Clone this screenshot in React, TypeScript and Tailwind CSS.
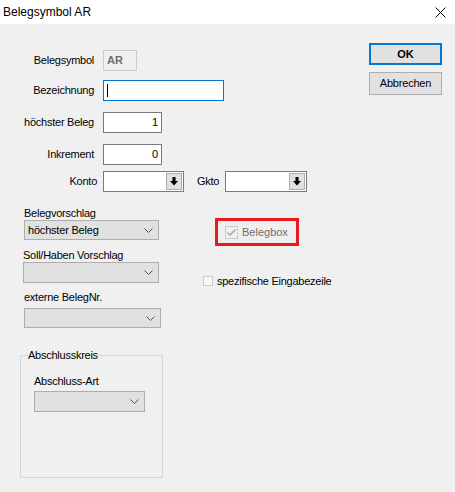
import React from "react";

const font = { fontFamily: '"Liberation Sans", Arial, sans-serif' };

function Chevron() {
  return (
    <svg width="9" height="5" viewBox="0 0 9 5" className="block">
      <path d="M0.5 0.5 L4.5 4.5 L8.5 0.5" fill="none" stroke="#505050" strokeWidth="1" />
    </svg>
  );
}

function Select({ value, className }: { value?: string; className: string }) {
  return (
    <div
      className={`flex items-center justify-between border border-[#adadad] bg-[#e1e1e1] pl-[3px] pr-[5px] text-[11px] tracking-[-0.2px] text-black ${className}`}
    >
      <span>{value}</span>
      <Chevron />
    </div>
  );
}

function ComboBox({ width }: { width: string }) {
  return (
    <div className={`flex h-[21px] shrink-0 items-center justify-end border border-[#7a7a7a] bg-white pr-[1px] ${width}`}>
      <div className="flex h-[17px] w-[16px] items-center justify-center border border-[#adadad] bg-[#e1e1e1]">
        <svg width="8" height="9" viewBox="0 0 8 9" className="block">
          <path d="M2.5 0 H5.5 V4 H8 L4 8.5 L0 4 H2.5 Z" fill="#000" />
        </svg>
      </div>
    </div>
  );
}

function Label({ children }: { children: React.ReactNode }) {
  return (
    <div className="w-[95px] shrink-0 pr-[1px] text-right text-[11px] tracking-[-0.25px] text-black">{children}</div>
  );
}

export default function App() {
  return (
    <div className="h-[492px] w-[455px] overflow-hidden bg-[#f0f0f0] text-black" style={font}>
      <div className="flex h-[24px] items-center justify-between bg-white pl-[3px] pr-[9px]">
        <span className="text-[12px]">Belegsymbol AR</span>
        <svg width="11" height="11" viewBox="0 0 11 11" className="block">
          <path d="M0.5 0.5 L10.5 10.5 M10.5 0.5 L0.5 10.5" stroke="#000" strokeWidth="1" />
        </svg>
      </div>

      <div className="flex">
        <div className="flex-1 pt-[26px]">
          <div className="flex h-[21px] items-center gap-[8px]">
            <Label>Belegsymbol</Label>
            <div className="flex h-[21px] w-[34px] items-center border border-[#cccccc] pl-[3px] text-[11px] font-bold text-[#6d6d6d]">
              AR
            </div>
          </div>
          <div className="mt-[9px] flex h-[21px] items-center gap-[8px]">
            <Label>Bezeichnung</Label>
            <div className="flex h-[21px] w-[121px] items-center border border-[#0078d7] bg-white pl-[3px]">
              <div className="h-[13px] w-px bg-black" />
            </div>
          </div>
          <div className="mt-[11px] flex h-[21px] items-center gap-[8px]">
            <Label>höchster Beleg</Label>
            <div className="flex h-[21px] w-[59px] items-center justify-end border border-[#7a7a7a] bg-white pr-[3px] text-[11px]">
              1
            </div>
          </div>
          <div className="mt-[11px] flex h-[21px] items-center gap-[8px]">
            <Label>Inkrement</Label>
            <div className="flex h-[21px] w-[59px] items-center justify-end border border-[#7a7a7a] bg-white pr-[3px] text-[11px]">
              0
            </div>
          </div>
          <div className="mt-[6px] flex h-[21px] items-center">
            <div className="w-[97px] shrink-0 text-right text-[11px] tracking-[-0.25px]">Konto</div>
            <ComboBox width="ml-[6px] w-[81px]" />
            <span className="ml-[13px] w-[28px] shrink-0 text-[11px] tracking-[-0.25px]">Gkto</span>
            <ComboBox width="w-[82px]" />
          </div>
        </div>

        <div className="mr-[13px] flex w-[73px] flex-col gap-[7px] pt-[19px]">
          <div className="flex h-[22px] items-center justify-center border-2 border-[#0078d7] bg-[#e1e1e1] text-[11px] font-bold">
            OK
          </div>
          <div className="flex h-[23px] items-center justify-center border border-[#adadad] bg-[#e1e1e1] text-[11px] tracking-[-0.2px]">
            Abbrechen
          </div>
        </div>
      </div>

      <div className="mt-[15px] flex">
        <div className="w-[161px] shrink-0 pl-[24px] text-[11px] tracking-[-0.25px]">
          <div className="h-[13px] leading-[13px]">Belegvorschlag</div>
          <Select value="höchster Beleg" className="h-[20px] w-[135px]" />
          <div className="mt-[9px] h-[13px] -ml-px leading-[13px]">Soll/Haben Vorschlag</div>
          <Select className="h-[21px] w-[136px] -ml-px" />
          <div className="mt-[8px] h-[13px] leading-[13px]">externe BelegNr.</div>
          <Select className="mt-[4px] h-[20px] w-[137px]" />
        </div>

        <div className="ml-[42px] flex flex-col items-start">
          <div className="ml-[12px] mt-[11px] flex h-[28px] w-[84px] items-center border-[3px] border-[#e81c1c] pl-[7px]">
            <div className="flex h-[13px] w-[13px] items-center justify-center border border-[#cccccc] bg-[#f0f0f0]">
              <svg width="9" height="7" viewBox="0 0 9 7" className="block">
                <path d="M0.5 3.5 L3 6 L8.5 0.5" fill="none" stroke="#a0a0a0" strokeWidth="1.3" />
              </svg>
            </div>
            <span className="ml-[4px] text-[11px] text-[#6d6d6d]">Belegbox</span>
          </div>
          <div className="mt-[28px] flex h-[14px] items-center">
            <div className="h-[10px] w-[10px] border border-[#cccccc] bg-[#f8f8f8]" />
            <span className="ml-[4px] text-[11px] tracking-[-0.25px]">spezifische Eingabezeile</span>
          </div>
        </div>
      </div>

      <fieldset className="ml-[20px] mt-[20px] h-[130px] w-[143px] border border-[#d5d5d5] p-0">
        <legend className="ml-[7px] h-[14px] px-0 text-[11px] leading-[14px] tracking-[-0.25px]">Abschlusskreis</legend>
        <div className="ml-[13px] mt-[13px] h-[13px] text-[11px] leading-[13px] tracking-[-0.25px]">Abschluss-Art</div>
        <Select className="ml-[13px] mt-[3px] h-[21px] w-[111px]" />
      </fieldset>
    </div>
  );
}
